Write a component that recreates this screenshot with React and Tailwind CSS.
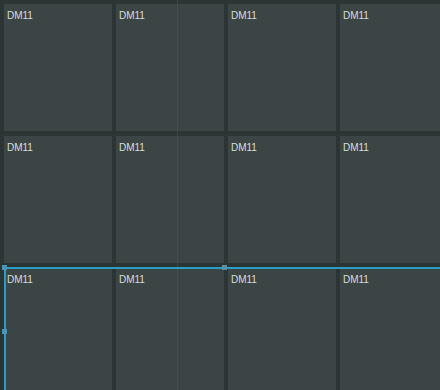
export default function App() {
  const rows = [0, 1, 2]
  const cols = [0, 1, 2, 3]

  return (
    <div className="relative w-[440px] h-[390px] overflow-hidden bg-[#2c3533]" style={{ fontFamily: "'Liberation Sans', Arial, sans-serif" }}>
      <div className="grid grid-cols-[repeat(4,108px)] grid-rows-[repeat(3,127px)] gap-x-[4px] gap-y-[5px] pl-[4px] pt-[4px]">
        {rows.map((r) =>
          cols.map((c) => (
            <div key={`${r}-${c}`} className="bg-[#3c4545] px-[3px] pt-[6px]">
              <div className="text-[10px] leading-[12px] text-[#dcdcdc]">DM11</div>
            </div>
          ))
        )}
      </div>

      {/* guide line */}
      <div className="absolute left-[177px] top-0 w-px h-full bg-[#7a3e3e] opacity-60" />

      {/* selection */}
      <div className="absolute left-[4px] top-[267px] right-0 h-[2px] bg-[#2a9ec6]" />
      <div className="absolute left-[4px] top-[267px] bottom-0 w-[2px] bg-[#2a9ec6]" />
      <div className="absolute left-[2px] top-[265px] w-[5px] h-[5px] bg-[#4a94b4]" />
      <div className="absolute left-[222px] top-[265px] w-[5px] h-[5px] bg-[#5a8fa8]" />
      <div className="absolute left-[2px] top-[329px] w-[5px] h-[5px] bg-[#4a94b4]" />
    </div>
  )
}
